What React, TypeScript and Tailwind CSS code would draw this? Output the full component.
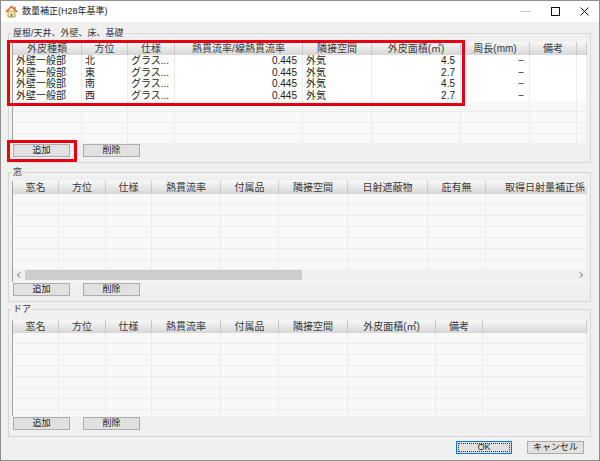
import React from "react";

const ui = "font-['Liberation_Sans','Noto_Sans_CJK_JP',sans-serif]";

const headCell =
  "flex items-center justify-center overflow-hidden whitespace-nowrap border-r border-[#c9c9c9] bg-linear-to-b from-[#f8f8f8] to-[#d7d7d7] text-[10px] leading-[13px] text-[#3a3a3a]";

function HeaderRow({ cols, labels }: { cols: string; labels: string[] }) {
  return (
    <div className={`grid h-[13px] shrink-0 ${cols}`}>
      {labels.map((l, i) => (
        <div key={i} className={headCell}>
          {l}
        </div>
      ))}
    </div>
  );
}

function BlankRows({ cols, count, n }: { cols: string; count: number; n: number }) {
  return (
    <>
      {Array.from({ length: count }).map((_, r) => (
        <div key={r} className={`grid h-[11px] shrink-0 ${cols}`}>
          {Array.from({ length: n }).map((_, c) => (
            <div key={c} className="border-r border-b border-[#ececec]" />
          ))}
        </div>
      ))}
    </>
  );
}

function Btn({ children, className = "" }: { children: React.ReactNode; className?: string }) {
  return (
    <button
      className={`flex h-[13px] w-[57px] items-center justify-center border border-[#adadad] bg-[#e1e1e1] text-[9px] leading-none text-[#222] ${className}`}
    >
      {children}
    </button>
  );
}

function Group({ label, className, children }: { label: string; className: string; children: React.ReactNode }) {
  return (
    <div className={`relative flex shrink-0 flex-col border border-[#d7d7d7] px-[3px] ${className}`}>
      <span className="absolute -top-[7px] left-[3px] bg-[#f0f0f0] px-px text-[9px] leading-[12px] text-[#333]">
        {label}
      </span>
      {children}
    </div>
  );
}

function AddDelete({ className = "" }: { className?: string }) {
  return (
    <div className={`flex gap-[13px] pl-px ${className}`}>
      <Btn>追加</Btn>
      <Btn>削除</Btn>
    </div>
  );
}

const wallCols = "grid-cols-[69px_46px_47px_128px_69px_89px_69px_47px_1fr]";
const winCols = "grid-cols-[46px_47px_46px_69px_58px_69px_80px_58px_1fr]";
const doorCols = "grid-cols-[46px_47px_46px_69px_58px_69px_88px_47px_1fr]";

const walls = [
  ["外壁一般部", "北", "グラス...", "0.445", "外気", "4.5", "−"],
  ["外壁一般部", "東", "グラス...", "0.445", "外気", "2.7", "−"],
  ["外壁一般部", "南", "グラス...", "0.445", "外気", "4.5", "−"],
  ["外壁一般部", "西", "グラス...", "0.445", "外気", "2.7", "−"],
];
const rightAligned = [false, false, false, true, false, true, true, false];

function HouseIcon() {
  return (
    <svg width="13" height="13" viewBox="0 0 13 13">
      <rect x="3" y="6" width="7" height="6" fill="#f7e7b0" stroke="#b9892e" strokeWidth="0.8" />
      <rect x="5.5" y="8.5" width="2" height="3.5" fill="#6aa84f" />
      <path d="M0.8 7 L6.5 1.5 L12.2 7" fill="none" stroke="#d9691c" strokeWidth="1.6" strokeLinejoin="round" />
      <rect x="9" y="2" width="1.5" height="3" fill="#d9691c" />
    </svg>
  );
}

export default function App() {
  return (
    <div className={`relative flex h-[461px] w-[600px] flex-col border border-[#8f8f8f] bg-[#f0f0f0] ${ui}`}>
      {/* title bar */}
      <div className="flex h-[21px] shrink-0 items-center bg-white">
        <div className="ml-[4px] flex w-[17px] items-center">
          <HouseIcon />
        </div>
        <span className="text-[9px] leading-none text-[#222]">数量補正(H28年基準)</span>
        <div className="ml-auto flex items-center gap-[20px] pr-[10px]">
          <svg width="11" height="9" viewBox="0 0 11 9">
            <line x1="0" y1="4.5" x2="11" y2="4.5" stroke="#c8c8c8" strokeWidth="1" />
          </svg>
          <svg width="9" height="9" viewBox="0 0 9 9">
            <rect x="0.5" y="0.5" width="8" height="8" fill="none" stroke="#111" strokeWidth="1" />
          </svg>
          <svg width="9" height="9" viewBox="0 0 9 9">
            <path d="M0.5 0.5 L8.5 8.5 M8.5 0.5 L0.5 8.5" stroke="#111" strokeWidth="1" />
          </svg>
        </div>
      </div>

      <div className="flex flex-col pt-[11px] pl-[7px] pr-[8px]">
        {/* roof / wall / floor */}
        <Group label="屋根/天井、外壁、床、基礎" className="h-[130px] pt-[8px]">
          <div className="flex h-[101px] flex-col overflow-hidden border-l border-[#a3a3a3] bg-[#f8f8f8]">
            <HeaderRow
              cols={wallCols}
              labels={["外皮種類", "方位", "仕様", "熱貫流率/線熱貫流率", "隣接空間", "外皮面積(㎡)", "周長(mm)", "備考", ""]}
            />
            {walls.map((row, r) => (
              <div key={r} className={`grid h-[11.5px] shrink-0 bg-white ${wallCols}`}>
                {row.map((t, c) => (
                  <div
                    key={c}
                    className={`overflow-hidden whitespace-nowrap border-r border-[#ececec] text-[10px] leading-[11.5px] text-[#222] ${
                      rightAligned[c] ? "pr-[5px] text-right" : "pl-[3px]"
                    }`}
                  >
                    {t}
                  </div>
                ))}
                <div className="border-r border-[#ececec]" />
                <div className="border-r border-[#ececec]" />
              </div>
            ))}
            <BlankRows cols={wallCols} count={4} n={9} />
          </div>
          <AddDelete className="mt-px" />
        </Group>

        {/* windows */}
        <Group label="窓" className="mt-[9px] h-[130px] pt-[8px]">
          <div className="flex h-[101px] flex-col overflow-hidden border-l border-[#a3a3a3] bg-[#f8f8f8]">
            <div className={`grid h-[13px] shrink-0 ${winCols}`}>
              {["窓名", "方位", "仕様", "熱貫流率", "付属品", "隣接空間", "日射遮蔽物", "庇有無"].map((l) => (
                <div key={l} className={headCell}>
                  {l}
                </div>
              ))}
              <div className={`${headCell} justify-end! pr-[2px] border-r-0`}>取得日射量補正係</div>
            </div>
            <div className="flex h-[75px] shrink-0 flex-col overflow-hidden">
              <BlankRows cols={winCols} count={7} n={9} />
            </div>
            <div className="flex h-[12px] shrink-0 items-center bg-[#f0f0f0]">
              <svg width="12" height="10" viewBox="0 0 12 10" className="shrink-0">
                <path d="M7 2.5 L4.5 5 L7 7.5" fill="none" stroke="#606060" strokeWidth="1" />
              </svg>
              <div className="h-[10px] w-[277px] bg-[#cdcdcd]" />
              <svg width="12" height="10" viewBox="0 0 12 10" className="ml-auto shrink-0">
                <path d="M5 2.5 L7.5 5 L5 7.5" fill="none" stroke="#606060" strokeWidth="1" />
              </svg>
            </div>
          </div>
          <AddDelete className="mt-px" />
        </Group>

        {/* doors */}
        <Group label="ドア" className="mt-[7px] h-[128px] pt-[10px]">
          <div className="flex h-[96px] flex-col overflow-hidden border-l border-[#a3a3a3] bg-[#f8f8f8]">
            <HeaderRow
              cols={doorCols}
              labels={["窓名", "方位", "仕様", "熱貫流率", "付属品", "隣接空間", "外皮面積(㎡)", "備考", ""]}
            />
            <BlankRows cols={doorCols} count={8} n={9} />
          </div>
          <AddDelete className="mt-px" />
        </Group>

        <div className="mt-[4px] mr-[7px] flex justify-end gap-[15px]">
          <button className="flex h-[13px] w-[56px] items-center justify-center border border-[#0078d7] bg-[#e1e1e1] p-px">
            <span className="flex h-full w-full items-center justify-center border border-dotted border-[#333] text-[9px] leading-none text-[#222]">
              OK
            </span>
          </button>
          <Btn className="w-[56px]">キャンセル</Btn>
        </div>
      </div>

      {/* highlight marks */}
      <div className="pointer-events-none absolute left-[6px] top-[39px] h-[66px] w-[458px] border-[3px] border-[#e60012]" />
      <div className="pointer-events-none absolute left-[6px] top-[139px] h-[22px] w-[70px] border-[3px] border-[#e60012]" />
    </div>
  );
}
